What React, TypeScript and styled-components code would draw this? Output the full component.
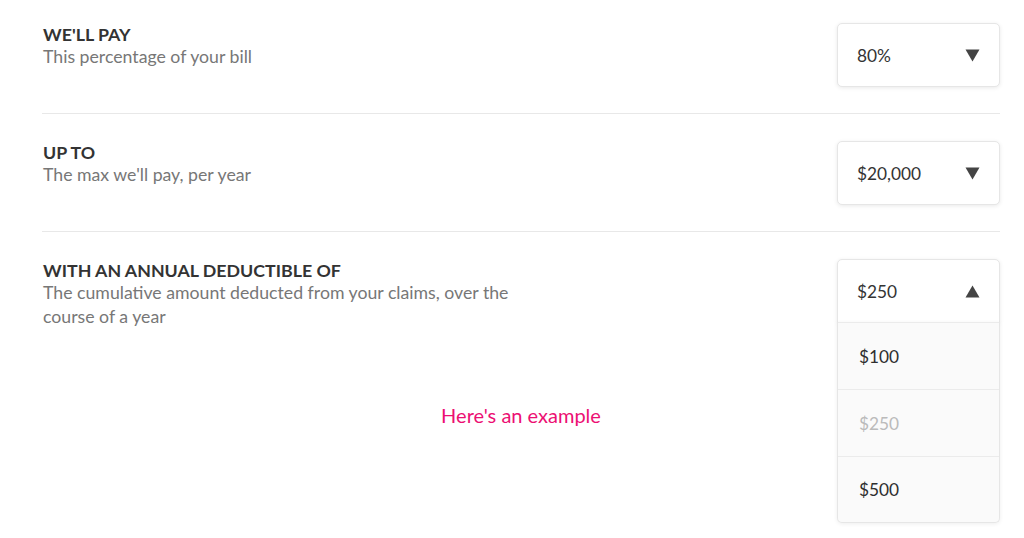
import React, { FC } from 'react'
import styled, { createGlobalStyle } from 'styled-components'

const GlobalStyle = createGlobalStyle`
  body {
    margin: 0;
    background: #fff;
    font-family: Lato, "Open Sans", sans-serif;
    color: #333;
  }
`

const Page = styled.div`
  width: 958px;
  min-height: 538px;
  margin-left: 42px;
`

const Row = styled.div`
  display: flex;
  justify-content: space-between;
  align-items: flex-start;
  padding: 27px 0 26px;
  border-bottom: 1px solid #e8e8e8;

  &:first-child {
    padding-top: 23px;
  }
  &:last-of-type {
    border-bottom: none;
  }
`

const Info = styled.div`
  max-width: 480px;
  padding-left: 1px;
`

const Title = styled.div`
  font-size: 17.8px;
  font-weight: 700;
  line-height: 22px;
  text-transform: uppercase;
  color: #333;
`

const Subtitle = styled.div`
  font-size: 17.7px;
  line-height: 24px;
  color: #777;
`

const SelectWrap = styled.div`
  position: relative;
  width: 163px;
`

const SelectBox = styled.div<{ $open?: boolean }>`
  display: flex;
  align-items: center;
  justify-content: space-between;
  box-sizing: border-box;
  height: 64px;
  padding: 0 19px;
  background: #fff;
  border: 1px solid #e6e6e6;
  border-radius: ${p => (p.$open ? '5px 5px 0 0' : '5px')};
  box-shadow: 0 1px 4px rgba(0, 0, 0, 0.09);
  font-size: 17.3px;
  color: #333;
`

const Caret = styled.svg`
  width: 15px;
  height: 13px;
  fill: #444;
`

const Menu = styled.div`
  position: absolute;
  top: 63px;
  left: 0;
  right: 0;
  background: #fafafa;
  border: 1px solid #e6e6e6;
  border-top: none;
  border-radius: 0 0 5px 5px;
  box-shadow: 0 1px 4px rgba(0, 0, 0, 0.07);
`

const Option = styled.div<{ $selected?: boolean }>`
  display: flex;
  align-items: center;
  height: 66px;
  padding-left: 21px;
  border-top: 1px solid #ebebeb;
  font-size: 17.3px;
  color: ${p => (p.$selected ? '#bbb' : '#2e2e2e')};

  &:last-child {
    height: 65px;
  }
`

const Example = styled.a`
  display: block;
  margin-top: 48px;
  text-align: center;
  font-size: 20px;
  line-height: 24px;
  color: #ec0f73;
  text-decoration: none;
`

function Arrow({ up }: { up?: boolean }) {
  return (
    <Caret viewBox="0 0 15 13">
      {up ? <path d="M7.5 0.5 L14.5 12.5 L0.5 12.5 Z" /> : <path d="M0.5 0.5 L14.5 0.5 L7.5 12.5 Z" />}
    </Caret>
  )
}

interface SettingProps {
  title: string
  subtitle: string
  value: string
  options?: string[]
}

const Setting: FC<SettingProps> = ({ title, subtitle, value, options }) => (
  <Row>
    <Info>
      <Title>{title}</Title>
      <Subtitle>{subtitle}</Subtitle>
    </Info>
    <SelectWrap>
      <SelectBox $open={!!options}>
        {value}
        <Arrow up={!!options} />
      </SelectBox>
      {options && (
        <Menu>
          {options.map(o => (
            <Option key={o} $selected={o === value}>
              {o}
            </Option>
          ))}
        </Menu>
      )}
    </SelectWrap>
  </Row>
)

const App: FC = () => (
  <>
    <GlobalStyle />
    <Page>
      <Setting title="We'll pay" subtitle="This percentage of your bill" value="80%" />
      <Setting title="Up to" subtitle="The max we'll pay, per year" value="$20,000" />
      <Setting
        title="With an annual deductible of"
        subtitle="The cumulative amount deducted from your claims, over the course of a year"
        value="$250"
        options={['$100', '$250', '$500']}
      />
      <Example href="#">Here's an example</Example>
    </Page>
  </>
)

export default App
